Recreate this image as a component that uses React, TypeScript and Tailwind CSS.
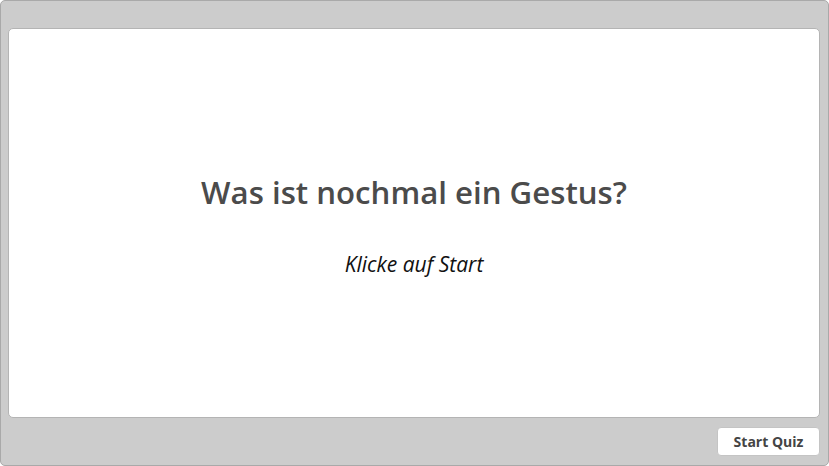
import React from 'react';

const App: React.FC = () => {
  return (
    <div className="w-[829px] h-[466px] bg-[#cccccc] border border-[#a9a9a9] rounded-[5px] flex flex-col pl-[7px] pr-[8px] pt-[27px] pb-[9px] font-['Open_Sans',sans-serif]">
      <div className="h-[390px] bg-white border border-[#b4b4b4] rounded-[5px] flex flex-col items-center justify-center pt-[4px]">
        <h1 className="text-[31.2px] font-semibold text-[#4b4b4b] leading-[40px] mb-[38px]">
          Was ist nochmal ein Gestus?
        </h1>
        <p className="text-[21px] italic text-[#111111] leading-[28px]">Klicke auf Start</p>
      </div>
      <div className="flex justify-end mt-[9px]">
        <button className="h-[29px] w-[103px] bg-white border border-[#c4c4c4] rounded-[4px] text-[14px] font-bold text-[#444444]">
          Start Quiz
        </button>
      </div>
    </div>
  );
};

export default App;
